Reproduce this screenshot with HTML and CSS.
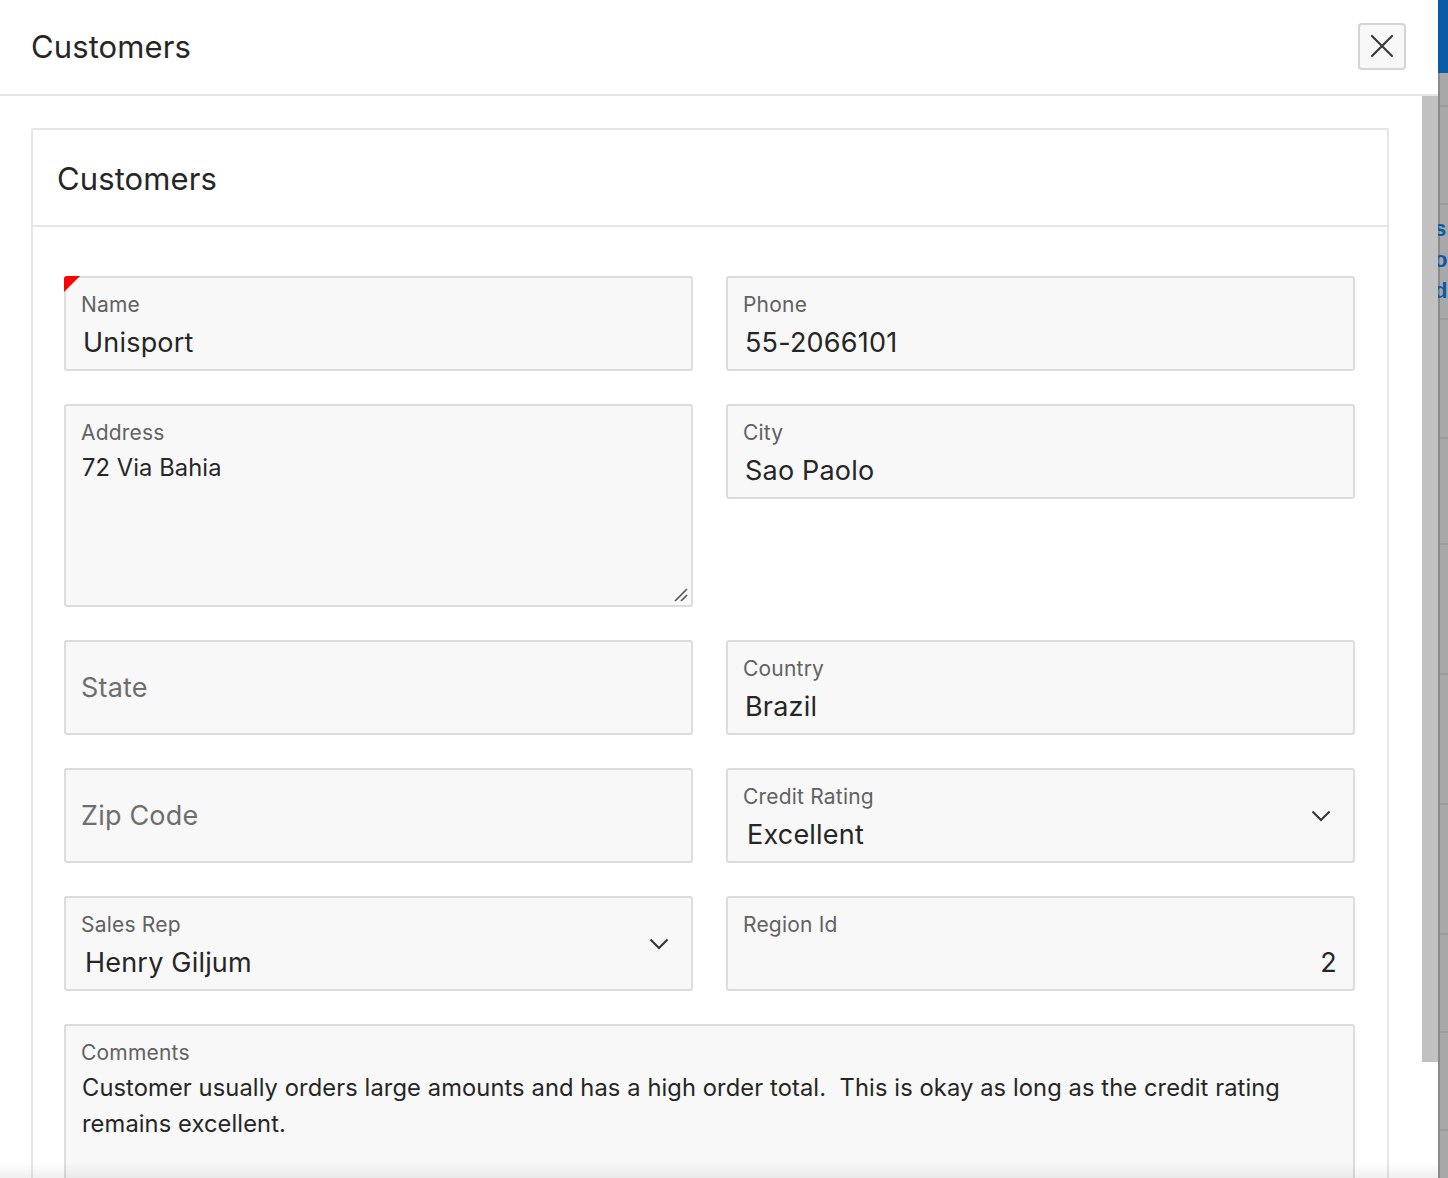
FILE: index.html
```html
<!DOCTYPE html>
<html lang="en">
<head>
<meta charset="utf-8">
<title>Customers</title>
<link rel="stylesheet" href="styles.css">
</head>
<body>
<div class="page">
  <div class="dialog">
    <header class="dlg-head">
      <h1 class="dlg-title">Customers</h1>
      <button class="close-btn" aria-label="Close">
        <svg width="24" height="24" viewBox="0 0 24 24"><path d="M2 2 L22 22 M22 2 L2 22" stroke="#3a3a3a" stroke-width="2.2" fill="none" stroke-linecap="round"/></svg>
      </button>
    </header>
    <div class="dlg-body">
      <div class="dlg-content">
        <section class="region">
          <div class="region-head"><h2 class="region-title">Customers</h2></div>
          <div class="region-body">
            <div class="form-grid">
              <div class="field required">
                <span class="flabel">Name</span>
                <span class="fvalue">Unisport</span>
              </div>
              <div class="field">
                <span class="flabel">Phone</span>
                <span class="fvalue">55-2066101</span>
              </div>
              <div class="field textarea tall">
                <span class="flabel">Address</span>
                <span class="tvalue">72 Via Bahia</span>
                <svg class="resize" width="14" height="14" viewBox="0 0 14 14"><path d="M1 13 L13 1 M7 13 L13 7" stroke="#555" stroke-width="1.6" fill="none"/></svg>
              </div>
              <div class="field">
                <span class="flabel">City</span>
                <span class="fvalue">Sao Paolo</span>
              </div>
              <div class="field empty">
                <span class="placeholder">State</span>
              </div>
              <div class="field">
                <span class="flabel">Country</span>
                <span class="fvalue">Brazil</span>
              </div>
              <div class="field empty">
                <span class="placeholder">Zip Code</span>
              </div>
              <div class="field select">
                <span class="flabel">Credit Rating</span>
                <span class="fvalue sel">Excellent</span>
                <svg class="chev" width="20" height="12" viewBox="0 0 20 12"><path d="M1.5 1.5 L10 10 L18.5 1.5" stroke="#333" stroke-width="2" fill="none"/></svg>
              </div>
              <div class="field select">
                <span class="flabel">Sales Rep</span>
                <span class="fvalue sel">Henry Giljum</span>
                <svg class="chev" width="20" height="12" viewBox="0 0 20 12"><path d="M1.5 1.5 L10 10 L18.5 1.5" stroke="#333" stroke-width="2" fill="none"/></svg>
              </div>
              <div class="field">
                <span class="flabel">Region Id</span>
                <span class="fvalue num">2</span>
              </div>
              <div class="field textarea wide">
                <span class="flabel">Comments</span>
                <span class="tvalue">Customer usually orders large amounts and has a high order total.&nbsp; This is okay as long as the credit rating remains excellent.</span>
              </div>
            </div>
          </div>
        </section>
      </div>
      <div class="scrollbar"><div class="thumb"></div></div>
      <div class="bottom-fade"></div>
    </div>
  </div>
  <div class="backdrop">
    <div class="bd-blue"></div>
    <div class="bd-grey">
      <div class="bd-row r0"></div>
      <div class="bd-row r1"></div>
      <div class="bd-links"><span>s</span><span>o</span><span>d</span></div>
      <div class="bd-row r3"></div>
      <div class="bd-row r3b"></div>
      <div class="bd-row r4"></div>
      <div class="bd-row r4"></div>
      <div class="bd-row r4"></div>
      <div class="bd-row r5"></div>
      <div class="bd-row r5"></div>
    </div>
  </div>
</div>
</body>
</html>
```

FILE: styles.css
```css
* { box-sizing: border-box; }
html, body { margin: 0; padding: 0; }
body {
  font-family: Inter, "Noto Sans", "Liberation Sans", sans-serif;
  color: #262626;
  background: #fff;
  overflow: hidden;
}
.page {
  display: flex;
  width: 1448px;
  height: 1178px;
}
.dialog {
  width: 1438px;
  height: 1178px;
  display: flex;
  flex-direction: column;
  background: #fff;
}
.dlg-head {
  height: 96px;
  flex: none;
  display: flex;
  align-items: center;
  justify-content: space-between;
  padding: 0 32px 0 31px;
  border-bottom: 2px solid #e6e6e6;
}
.dlg-title {
  margin: 0;
  font-size: 31px;
  font-weight: 400;
  color: #262626;
  letter-spacing: 0.1px;
  margin-top: -1px;
}
.close-btn {
  width: 48px;
  height: 47px;
  border: 2px solid #d4d4d4;
  border-radius: 4px;
  background: #f8f8f8;
  display: flex;
  align-items: center;
  justify-content: center;
  padding: 0;
  margin-top: -2px;
}
.dlg-body {
  flex: 1;
  display: flex;
  position: relative;
  overflow: hidden;
}
.dlg-content {
  flex: 1;
  padding: 32px 33px 0 31px;
}
.scrollbar {
  width: 16px;
  flex: none;
}
.thumb {
  height: 966px;
  background: #c1c1c1;
}
.bottom-fade {
  position: absolute;
  left: 0; right: 0; bottom: 0;
  height: 16px;
  background: linear-gradient(to bottom, rgba(0,0,0,0), rgba(0,0,0,0.06));
}
.region {
  border: 2px solid #e6e6e6;
  border-bottom: none;
  border-radius: 2px;
  height: 1200px;
}
.region-head {
  height: 97px;
  border-bottom: 2px solid #e6e6e6;
  display: flex;
  align-items: center;
  padding-left: 24px;
}
.region-title {
  margin: 0;
  font-size: 31px;
  font-weight: 400;
  color: #262626;
  letter-spacing: 0.1px;
  margin-top: 1px;
}
.region-body {
  padding: 49px 32px 0 31px;
}
.form-grid {
  display: grid;
  grid-template-columns: 629px 629px;
  column-gap: 33px;
  row-gap: 33px;
  align-items: start;
}
.field {
  position: relative;
  height: 95px;
  background: #f8f8f8;
  border: 2px solid #dcdcdc;
  border-radius: 3px;
  padding: 16px 16px 0 15px;
  display: flex;
  flex-direction: column;
}
.field.tall { height: 203px; }
.field.wide { grid-column: span 2; height: 170px; }
.field.required::before {
  content: "";
  position: absolute;
  left: -2px; top: -2px;
  width: 0; height: 0;
  border-top: 16px solid #ff0000;
  border-right: 16px solid transparent;
  border-top-left-radius: 3px;
}
.flabel {
  font-size: 21px;
  line-height: 22px;
  color: #626262;
  letter-spacing: 0.2px;
}
.fvalue {
  margin-top: 10px;
  font-size: 27px;
  line-height: 34px;
  color: #262626;
  padding-left: 2px;
  letter-spacing: 0.2px;
}
.fvalue.sel { padding-left: 4px; }
.fvalue.num { text-align: right; }
.tvalue {
  margin-top: 6px;
  font-size: 23.7px;
  line-height: 36px;
  color: #262626;
  padding-left: 1px;
  letter-spacing: 0.1px;
}
.field.empty {
  justify-content: center;
  padding-top: 0;
}
.placeholder {
  font-size: 27px;
  line-height: 34px;
  color: #6e6e6e;
  letter-spacing: 0.2px;
}
.chev {
  position: absolute;
  right: 22px;
  top: 40px;
}
.resize {
  position: absolute;
  right: 3px;
  bottom: 3px;
}
.backdrop {
  width: 10px;
  height: 1178px;
  display: flex;
  flex-direction: column;
  overflow: hidden;
}
.bd-blue {
  height: 73px;
  background: #0b5aa6;
  flex: none;
}
.bd-grey {
  flex: 1;
  background: #a8a8a8;
  border-left: 2px solid #8a8a8a;
  display: flex;
  flex-direction: column;
}
.bd-row { flex: none; border-bottom: 2px solid #9c9c9c; }
.bd-row.r0 { height: 34px; }
.bd-row.r1 { height: 98px; }
.bd-row.r3 { height: 119px; }
.bd-row.r3b { height: 106px; }
.bd-row.r4 { height: 130px; }
.bd-row.r5 { height: 98px; }
.bd-links {
  flex: none;
  height: 115px;
  border-bottom: 2px solid #9c9c9c;
  display: flex;
  flex-direction: column;
  padding-top: 8px;
  font-family: "Liberation Sans", sans-serif;
  font-weight: 700;
  font-size: 22px;
  line-height: 31px;
  color: #0b5aa6;
  white-space: nowrap;
}
.bd-links span { display: block; margin-left: -6px; }
```
